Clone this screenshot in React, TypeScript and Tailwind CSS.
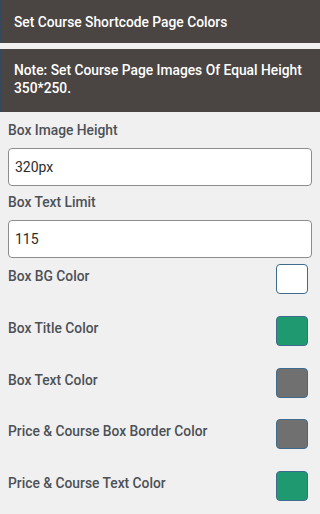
import React from 'react'

const colorFields = [
  { label: 'Box BG Color', color: '#ffffff' },
  { label: 'Box Title Color', color: '#1e9970' },
  { label: 'Box Text Color', color: '#707070' },
  { label: 'Price & Course Box Border Color', color: '#707070' },
  { label: 'Price & Course Text Color', color: '#1e9970' },
]

const App: React.FC = () => {
  return (
    <div className="w-[320px] h-[514px] bg-[#f0f0f0] overflow-hidden font-['Roboto',sans-serif]">
      <div className="h-[43px] bg-[#4a4542] border-l border-[#34495e] pl-[13px] pr-[8px] pt-[1px] flex items-center text-white text-[13.8px] font-medium">
        Set Course Shortcode Page Colors
      </div>
      <div className="mt-[6px] bg-[#4a4542] border-l border-[#34495e] pl-[13px] pr-[6px] pt-[12px] pb-[15px] text-white text-[13.8px] leading-[18px] font-medium">
        Note: Set Course Page Images Of Equal Height 350*250.
      </div>

      <div className="px-[8px]">
        <label className="block mt-[8px] text-[13.8px] leading-[20px] font-medium text-[#4c5157]">
          Box Image Height
        </label>
        <input
          defaultValue="320px"
          className="mt-[8px] block w-full h-[38px] bg-white border border-[#8c8c8c] rounded-[4px] px-[6px] text-[14px] text-[#2c2c2c] outline-none"
        />
        <label className="block mt-[6px] text-[13.8px] leading-[20px] font-medium text-[#4c5157]">
          Box Text Limit
        </label>
        <input
          defaultValue="115"
          className="mt-[8px] block w-full h-[38px] bg-white border border-[#8c8c8c] rounded-[4px] px-[6px] text-[14px] text-[#2c2c2c] outline-none"
        />

        <div className="mt-[6px]">
          {colorFields.map((f) => (
            <div key={f.label} className="h-[51.75px] flex items-start justify-between">
              <span className="pt-[2px] text-[13.8px] leading-[20px] font-medium text-[#4c5157]">{f.label}</span>
              <span
                className="mr-[4px] w-[32px] h-[30px] rounded-[4px] border border-[#3f6b8c]"
                style={{ backgroundColor: f.color }}
              />
            </div>
          ))}
        </div>
      </div>
    </div>
  )
}

export default App
